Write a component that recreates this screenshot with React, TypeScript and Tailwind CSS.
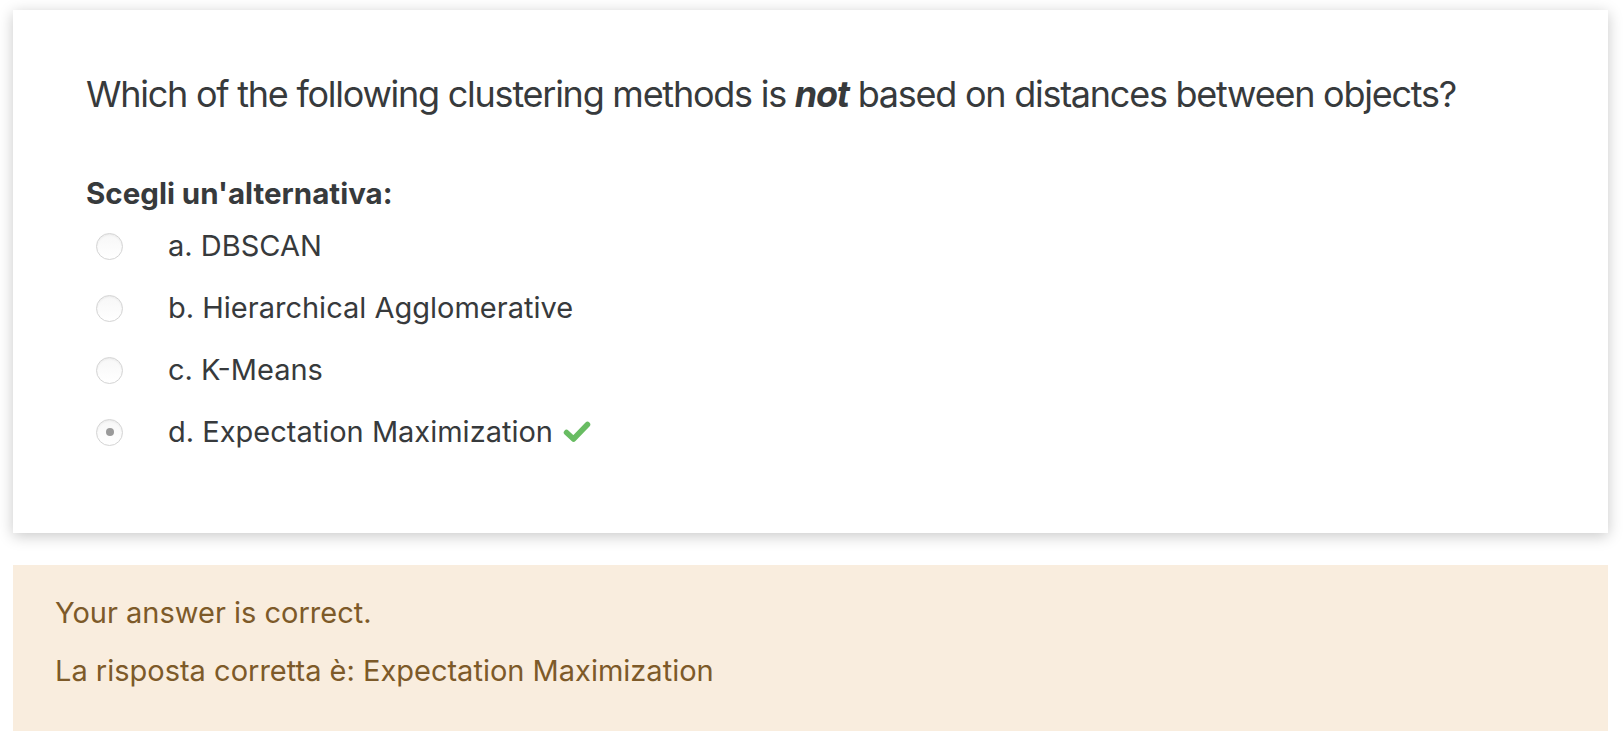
import React from 'react'

const font = { fontFamily: 'Inter, "Noto Sans", sans-serif' }

type Option = { key: string; label: string; selected?: boolean; correct?: boolean }

const options: Option[] = [
  { key: 'a', label: 'DBSCAN' },
  { key: 'b', label: 'Hierarchical Agglomerative' },
  { key: 'c', label: 'K-Means' },
  { key: 'd', label: 'Expectation Maximization', selected: true, correct: true },
]

function Radio({ selected }: { selected?: boolean }) {
  return (
    <div className="w-[27px] h-[27px] rounded-full border border-[#d4d4d4] bg-gradient-to-b from-[#f7f7f7] to-white shadow-[inset_0_1px_2px_rgba(0,0,0,0.06)] flex items-center justify-center shrink-0">
      {selected && <div className="w-[8px] h-[8px] rounded-full bg-[#9a9a9a]" />}
    </div>
  )
}

function CheckMark() {
  // green tick shown next to the right answer
  return (
    <svg width="28" height="22" viewBox="0 0 28 22" className="ml-[10px]">
      <polyline
        points="3.5,11.5 10.5,18 24.5,3.5"
        fill="none"
        stroke="#68bc62"
        strokeWidth="5.5"
        strokeLinecap="round"
        strokeLinejoin="round"
      />
    </svg>
  )
}

export default function App() {
  return (
    <div className="w-[1624px] h-[752px] bg-white overflow-hidden pt-[10px]" style={font}>
      <div className="ml-[13px] w-[1595px] h-[523px] bg-white shadow-[0_3px_14px_rgba(0,0,0,0.22)] px-[73px] pt-[62px] text-[#373a3c]">
        <div className="text-[36px] leading-[44px] tracking-[-1.25px] whitespace-nowrap">
          Which of the following clustering methods is <strong className="italic font-bold">not</strong> based on distances between objects?
        </div>

        <div className="mt-[60px] text-[29.5px] leading-[34px] font-bold">Scegli un'alternativa:</div>

        <div className="mt-[5px] flex flex-col">
          {options.map((o) => (
            <div key={o.key} className="h-[62px] flex items-center">
              <div className="ml-[10px]">
                <Radio selected={o.selected} />
              </div>
              <div className="ml-[45px] text-[29px] leading-[34px] flex items-center">
                <span>
                  {o.key}. {o.label}
                </span>
                {o.correct && <CheckMark />}
              </div>
            </div>
          ))}
        </div>
      </div>

      <div className="ml-[13px] mt-[32px] w-[1595px] h-[166px] bg-[#f9edde] px-[42px] pt-[28px] text-[#7d5a29] text-[29px] leading-[40px]">
        <p>Your answer is correct.</p>
        <p className="mt-[18px]">La risposta corretta è: Expectation Maximization</p>
      </div>
    </div>
  )
}
